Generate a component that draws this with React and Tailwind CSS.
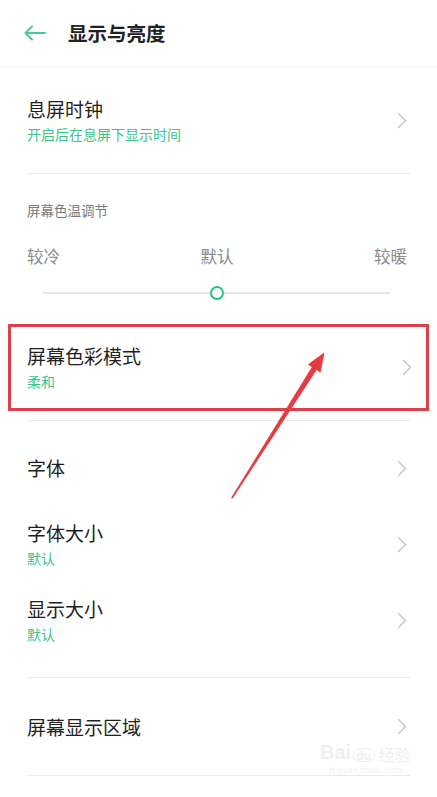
const GREEN = 'text-[#3cc48a]';

const Chevron = () => (
  <svg width="10" height="17" viewBox="0 0 10 17" className="shrink-0">
    <path d="M1.5 1.5 L8.5 8.5 L1.5 15.5" fill="none" stroke="#cacaca" strokeWidth="1.6" strokeLinecap="round" strokeLinejoin="round" />
  </svg>
);

const RowText = ({ title, sub }) => (
  <div className="flex flex-col">
    <span className="text-[19px] leading-[26px] text-[#1f1f1f]">{title}</span>
    {sub && <span className={`mt-[1px] text-[14px] leading-[22px] ${GREEN}`}>{sub}</span>}
  </div>
);

const Divider = () => <div className="mx-[27px] h-px bg-[#ebebeb]" />;

const App = () => {
  return (
    <div
      className="relative w-[437px] h-[797px] overflow-hidden bg-white"
      style={{ fontFamily: '"Noto Sans CJK SC", "Noto Sans", sans-serif' }}
    >
      {/* header */}
      <header className="h-[67px] flex items-center border-b border-[#f3f3f3]">
        <svg width="22" height="16" viewBox="0 0 22 16" className="ml-[24px]">
          <path d="M21 8 H2 M8 1.5 L1.5 8 L8 14.5" fill="none" stroke="#48c892" strokeWidth="2" strokeLinecap="round" strokeLinejoin="round" />
        </svg>
        <h1 className="ml-[22px] text-[19.5px] font-bold text-[#222]">显示与亮度</h1>
      </header>

      <div className="h-[106px] flex items-center justify-between pl-[27px] pr-[30px]">
        <RowText title="息屏时钟" sub="开启后在息屏下显示时间" />
        <Chevron />
      </div>
      <Divider />

      {/* colour temperature */}
      <div className="pt-[26px] pb-[24px]">
        <p className="pl-[27px] text-[13.5px] leading-[20px] text-[#7a7a7a]">屏幕色温调节</p>
        <div className="mt-[24px] flex justify-between pl-[27px] pr-[30px] text-[16.5px] leading-[24px] text-[#8a8a8a]">
          <span>较冷</span>
          <span>默认</span>
          <span>较暖</span>
        </div>
        <div className="mt-[18px] ml-[43px] mr-[47px] h-[14px] flex items-center">
          <div className="flex-1 h-[1.5px] bg-[#e6e6e6]" />
          <div className="w-[14px] h-[14px] rounded-full border-[2.5px] border-[#2fc283] bg-white" />
          <div className="flex-1 h-[1.5px] bg-[#e6e6e6]" />
        </div>
      </div>

      {/* highlighted row */}
      <div className="mx-[8px] h-[87px] border-[3px] border-[#dc4048] flex items-center justify-between pl-[16px] pr-[14px]">
        <RowText title="屏幕色彩模式" sub="柔和" />
        <Chevron />
      </div>
      <div className="mt-[9px]">
        <Divider />
      </div>

      <div className="pt-[9px] pb-[19px]">
        <div className="h-[76px] flex items-center justify-between pl-[27px] pr-[30px]">
          <RowText title="字体" />
          <Chevron />
        </div>
        <div className="h-[76px] flex items-center justify-between pl-[27px] pr-[30px]">
          <RowText title="字体大小" sub="默认" />
          <Chevron />
        </div>
        <div className="h-[76px] flex items-center justify-between pl-[27px] pr-[30px]">
          <RowText title="显示大小" sub="默认" />
          <Chevron />
        </div>
      </div>
      <Divider />

      <div className="h-[97px] flex items-center justify-between pl-[27px] pr-[30px]">
        <RowText title="屏幕显示区域" />
        <Chevron />
      </div>
      <Divider />

      {/* watermark */}
      <div className="absolute left-[320px] top-[742px] flex flex-col items-center pointer-events-none">
        <div className="flex items-end gap-[2px] text-[#f0f0f0] leading-none">
          <span className="text-[20px] font-bold" style={{ fontFamily: 'Arial, "Liberation Sans", sans-serif' }}>Bai</span>
          <span className="text-[12px] font-bold px-[2px] rounded-full border border-[#f0f0f0]">du</span>
          <span className="text-[16px] ml-[2px]">经验</span>
        </div>
        <span className="mt-[4px] text-[9px] leading-none text-[#f2f2f2]" style={{ fontFamily: '"Liberation Sans", sans-serif' }}>
          jingyan.baidu.com
        </span>
      </div>

      {/* annotation arrow */}
      <svg className="absolute inset-0 pointer-events-none" width="437" height="797" viewBox="0 0 437 797">
        <polygon
          points="231.6,497.7 312.3,366.9 308.5,364.4 324,353 320.3,372 316.5,369.5 232.4,498.3"
          fill="#e53a40"
          stroke="#e53a40"
          strokeWidth="0.8"
          strokeLinejoin="round"
        />
      </svg>
    </div>
  );
};

export default App;
